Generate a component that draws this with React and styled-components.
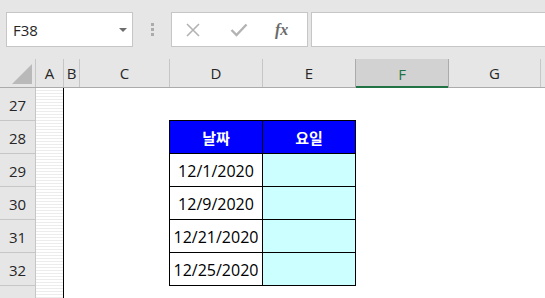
import React from 'react';
import styled, { createGlobalStyle } from 'styled-components';

const GlobalStyle = createGlobalStyle`
  html, body {
    margin: 0;
    padding: 0;
    background: #ffffff;
    font-family: "Open Sans", "Noto Sans", "Noto Sans CJK KR", sans-serif;
    overflow: hidden;
  }
`;

const COLUMNS = [
  { key: 'A', width: 28 },
  { key: 'B', width: 16 },
  { key: 'C', width: 90 },
  { key: 'D', width: 93 },
  { key: 'E', width: 93 },
  { key: 'F', width: 94, active: true },
  { key: 'G', width: 92 },
  { key: 'H', width: 92, hidden: true },
];

const ROWS = [27, 28, 29, 30, 31, 32, 33];

const DATA = ['12/1/2020', '12/9/2020', '12/21/2020', '12/25/2020'];

const Window = styled.div`
  width: 545px;
  height: 298px;
  display: flex;
  flex-direction: column;
  overflow: hidden;
`;

// formula bar
const Toolbar = styled.div`
  height: 59px;
  flex-shrink: 0;
  background: #e6e6e6;
  display: flex;
  align-items: flex-start;
  padding: 12px 0 0 6px;
  box-sizing: border-box;
`;

const NameBox = styled.div`
  width: 127px;
  height: 35px;
  box-sizing: border-box;
  background: #ffffff;
  border: 1px solid #c6c6c6;
  display: flex;
  align-items: center;
  justify-content: space-between;
  padding: 0 5px 0 6px;
  font-size: 15px;
  color: #262626;
`;

const Caret = styled.span`
  width: 0;
  height: 0;
  border-left: 4px solid transparent;
  border-right: 4px solid transparent;
  border-top: 4px solid #6d6d6d;
  margin-top: 1px;
`;

const Grip = styled.div`
  width: 38px;
  height: 35px;
  display: flex;
  flex-direction: column;
  align-items: center;
  justify-content: center;
  gap: 2px;

  span {
    width: 3px;
    height: 3px;
    background: #ababab;
  }
`;

const FxBox = styled.div`
  width: 137px;
  height: 35px;
  box-sizing: border-box;
  background: #ffffff;
  border: 1px solid #c6c6c6;
  display: flex;
  align-items: center;
  padding-left: 13px;
  gap: 29px;
`;

const Fx = styled.span`
  font-family: "Liberation Serif", "DejaVu Serif", serif;
  font-style: italic;
  font-weight: bold;
  font-size: 16px;
  color: #6a6a6a;
  margin-left: -2px;
`;

const FormulaInput = styled.div`
  flex: 1;
  margin-left: 3px;
  height: 35px;
  box-sizing: border-box;
  background: #ffffff;
  border: 1px solid #c6c6c6;
  border-right: none;
`;

// column headers
const HeaderRow = styled.div`
  display: flex;
  height: 29px;
  flex-shrink: 0;
  background: #e6e6e6;
  border-bottom: 1px solid #ababab;
  box-sizing: border-box;
`;

const Corner = styled.div`
  width: 36px;
  flex-shrink: 0;
  border-right: 1px solid #c6c6c6;
  box-sizing: border-box;
  position: relative;

  &::after {
    content: '';
    position: absolute;
    right: 3px;
    bottom: 3px;
    width: 0;
    height: 0;
    border-left: 20px solid transparent;
    border-bottom: 20px solid #b9b9b9;
  }
`;

const ColHead = styled.div`
  width: ${(p) => p.$w}px;
  flex-shrink: 0;
  box-sizing: border-box;
  border-right: 1px solid ${(p) => (p.$active ? '#ababab' : '#c6c6c6')};
  border-left: ${(p) => (p.$active ? '1px solid #ababab' : 'none')};
  margin-left: ${(p) => (p.$active ? '-1px' : '0')};
  background: ${(p) => (p.$active ? '#d2d2d2' : 'transparent')};
  box-shadow: ${(p) => (p.$active ? 'inset 0 -2px 0 #217346' : 'none')};
  margin-bottom: ${(p) => (p.$active ? '-1px' : '0')};
  display: flex;
  align-items: center;
  justify-content: center;
  font-size: 15px;
  color: ${(p) => (p.$active ? '#217346' : '#262626')};
`;

// sheet body
const Body = styled.div`
  flex: 1;
  display: flex;
  min-height: 0;
`;

const RowHeads = styled.div`
  width: 36px;
  flex-shrink: 0;
  background: #e6e6e6;
  border-right: 1px solid #c6c6c6;
  box-sizing: border-box;
  display: flex;
  flex-direction: column;
`;

const RowHead = styled.div`
  height: 33px;
  flex-shrink: 0;
  box-sizing: border-box;
  border-bottom: 1px solid #c6c6c6;
  display: flex;
  align-items: center;
  justify-content: center;
  font-size: 15px;
  color: #262626;
  padding-top: 1px;
`;

const Stripes = styled.div`
  width: 27px;
  flex-shrink: 0;
  background: repeating-linear-gradient(
    to bottom,
    #ffffff 0px,
    #ffffff 2px,
    #ececec 2px,
    #ececec 3px
  );
  border-right: 1px solid #000000;
`;

const Canvas = styled.div`
  flex: 1;
  background: #ffffff;
  padding: 32px 0 0 105px;
`;

const Table = styled.div`
  display: grid;
  grid-template-columns: 92px 92px;
  grid-auto-rows: 32px;
  gap: 1px;
  padding: 1px;
  background: #000000;
  width: fit-content;
`;

const HeadCell = styled.div`
  background: #0000ff;
  color: #ffffff;
  font-family: "Noto Sans CJK KR", "Noto Sans", sans-serif;
  font-weight: bold;
  font-size: 15px;
  display: flex;
  align-items: center;
  justify-content: center;
`;

const Cell = styled.div`
  background: ${(p) => (p.$tint ? '#ccffff' : '#ffffff')};
  color: #000000;
  font-size: 16px;
  display: flex;
  align-items: center;
  justify-content: center;
  padding-top: 1px;
`;

const CrossIcon = () => (
  <svg width="16" height="14" viewBox="0 0 16 14">
    <path d="M2 1 L14 13 M14 1 L2 13" stroke="#b3b3b3" strokeWidth="1.6" fill="none" />
  </svg>
);

const CheckIcon = () => (
  <svg width="18" height="14" viewBox="0 0 18 14">
    <path d="M1.5 7 L6.5 12 L16.5 1.5" stroke="#b3b3b3" strokeWidth="2.4" fill="none" />
  </svg>
);

const App = () => (
  <>
    <GlobalStyle />
    <Window>
      <Toolbar>
        <NameBox>
          F38
          <Caret />
        </NameBox>
        <Grip>
          <span />
          <span />
          <span />
        </Grip>
        <FxBox>
          <CrossIcon />
          <CheckIcon />
          <Fx>fx</Fx>
        </FxBox>
        <FormulaInput />
      </Toolbar>

      <HeaderRow>
        <Corner />
        {COLUMNS.map((c) => (
          <ColHead key={c.key} $w={c.width} $active={c.active}>
            {c.hidden ? '' : c.key}
          </ColHead>
        ))}
      </HeaderRow>

      <Body>
        <RowHeads>
          {ROWS.map((r) => (
            <RowHead key={r}>{r < 33 ? r : ''}</RowHead>
          ))}
        </RowHeads>
        <Stripes />
        <Canvas>
          <Table>
            <HeadCell>날짜</HeadCell>
            <HeadCell>요일</HeadCell>
            {DATA.map((d) => (
              <React.Fragment key={d}>
                <Cell>{d}</Cell>
                <Cell $tint />
              </React.Fragment>
            ))}
          </Table>
        </Canvas>
      </Body>
    </Window>
  </>
);

export default App;
